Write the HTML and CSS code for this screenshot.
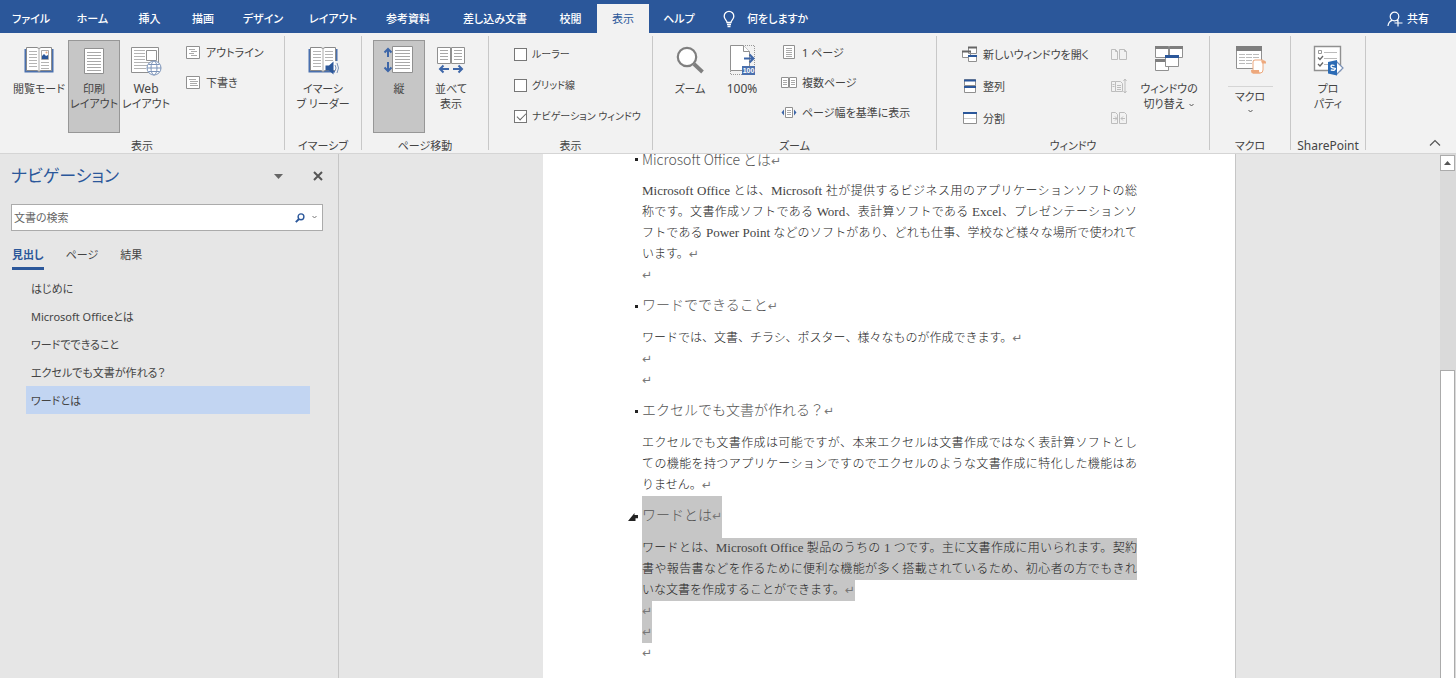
FILE: index.html
```html
<!DOCTYPE html>
<html lang="ja">
<head>
<meta charset="utf-8">
<meta name="viewport" content="width=device-width, initial-scale=1">
<title>Word - 表示</title>
<link rel="stylesheet" href="styles.css">
</head>
<body>
<header class="menubar">
  <nav class="tabs" aria-label="リボン タブ">
    <button class="tab">ファイル</button>
    <button class="tab">ホーム</button>
    <button class="tab">挿入</button>
    <button class="tab">描画</button>
    <button class="tab">デザイン</button>
    <button class="tab">レイアウト</button>
    <button class="tab">参考資料</button>
    <button class="tab">差し込み文書</button>
    <button class="tab">校閲</button>
    <button class="tab tab-active" aria-current="page">表示</button>
    <button class="tab">ヘルプ</button>
  </nav>
  <button class="tellme">
    <svg width="12" height="18" viewBox="0 0 12 18" fill="none" stroke="#fff" stroke-width="1.3"><path d="M4 12.500c0-2-2.800-3-2.800-6.300a4.800 4.800 0 0 1 9.600 0c0 3.300-2.800 4.300-2.800 6.300zM4 14.500h4M4.500 16.500h3"/></svg>
    何をしますか
  </button>
  <button class="share">
    <svg width="16" height="16" viewBox="0 0 16 16" fill="none" stroke="#fff" stroke-width="1.200"><circle cx="7.500" cy="5.500" r="4.300"/><path d="M1 15c.3-3 1.800-5 4.200-5.700M9.500 9.300l1.500 1M11 8.500v7M7.500 12h8"/></svg>
    共有
  </button>
</header>

<div class="ribbon">
  <section class="group">
    <div class="group-body group-views">
      <button class="big">
        <svg width="32" height="32" viewBox="0 0 32 32"><path d="M1.500 5h29v23.500h-29z" fill="#4a70ae"/><path d="M3.500 3.500H14l2 1 2-1h10.500v23H18l-2 1-2-1H3.500z" fill="#fff" stroke="#8a8a8a"/><path d="M16 4.500v23" stroke="#aaa"/><path d="M6 7.500h8M6 10.500h8M6 13.500h8M6 16.500h8M6 19.500h8M6 22.500h8M18 18.500h8M18 21.500h8M18 24.500h8" stroke="#b4b4b4"/><path d="M18.500 6.500h7v9h-7z" fill="#fff" stroke="#aaa"/><path d="M19 15v-3l2-2 2 2 2-1v4z" fill="#2b579a"/><circle cx="23.500" cy="8.500" r="1" fill="#eda87c"/></svg>
        <span>閲覧モード</span>
      </button>
      <button class="big big-on" aria-pressed="true">
        <svg width="32" height="32" viewBox="0 0 32 32"><path d="M6.500 4.500h19v25h-19z" fill="#fff" stroke="#909090"/><path d="M9 8.500h14M9 11.500h14M9 14.500h14M9 17.500h14M9 20.500h14M9 23.500h14M9 26.500h14" stroke="#a8a8a8"/></svg>
        <span>印刷<br>レイアウト</span>
      </button>
      <button class="big">
        <svg width="32" height="32" viewBox="0 0 32 32"><path d="M1.500 3.500h27v25h-27z" fill="#fff" stroke="#909090"/><path d="M4 6.500h11M4 9.500h11M4 12.500h11M4 15.500h11M4 18.500h22M4 21.500h22M4 24.500h12" stroke="#b4b4b4"/><path d="M16.500 6.500h10v10h-10z" fill="#fff" stroke="#909090"/><g fill="#fff" stroke="#7b93b8"><circle cx="24" cy="24" r="7"/><ellipse cx="24" cy="24" rx="3" ry="7"/><path d="M17 24h14M18.500 20.500h11M18.500 27.500h11" fill="none"/></g></svg>
        <span><b class="latin">Web</b><br>レイアウト</span>
      </button>
      <div class="list">
        <button class="small"><svg width="16" height="16" viewBox="0 0 16 16"><path d="M1.500 2.500h13v12h-13z" fill="#fff" stroke="#909090"/><path d="M4 5.500h6M6 7.500h6M4 9.500h5M6 11.500h6" stroke="#aaa"/></svg>アウトライン</button>
        <button class="small"><svg width="16" height="16" viewBox="0 0 16 16"><path d="M1.500 2.500h13v12h-13z" fill="#fff" stroke="#909090"/><path d="M4 5.500h7M5 7.500h8M5 9.500h7M5 11.500h8" stroke="#aaa"/></svg>下書き</button>
      </div>
    </div>
    <h2 class="group-name">表示</h2>
  </section>

  <section class="group">
    <div class="group-body group-center">
      <button class="big">
        <svg width="32" height="32" viewBox="0 0 32 32"><path d="M1.500 5h29v23.500h-29z" fill="#4a70ae"/><path d="M3.500 3.500H14l2 1 2-1h10.500v23H18l-2 1-2-1H3.500z" fill="#fff" stroke="#8a8a8a"/><path d="M16 4.500v23" stroke="#aaa"/><path d="M6 7.500h8M6 10.500h8M6 13.500h8M6 16.500h8M6 19.500h8M6 22.500h8M18 7.500h8M18 10.500h8M18 13.500h8M18 16.500h8" stroke="#b4b4b4"/><path d="M28 17h4v14h-4z" fill="#f2f2f2"/><path d="M18.500 21.500H22l4.500-4v13l-4.500-4h-3.500z" fill="#2b579a"/><path d="M28 21q2 3 0 6M30 19q3 5 0 10" fill="none" stroke="#7b93b8"/></svg>
        <span>イマーシ<br>ブ リーダー</span>
      </button>
    </div>
    <h2 class="group-name">イマーシブ</h2>
  </section>

  <section class="group">
    <div class="group-body group-move">
      <button class="big big-on" aria-pressed="true">
        <svg width="32" height="32" viewBox="0 0 32 32"><path d="M9.500 2.500h20v26h-20z" fill="#fff" stroke="#909090"/><path d="M12 6.500h15M12 9.500h15M12 12.500h15M12 15.500h15M12 18.500h15M12 21.500h15M12 24.500h15" stroke="#a8a8a8"/><path d="M5 13V5M1.500 8.500 5 5l3.500 3.500M5 18v9M1.500 23.500 5 27l3.500-3.500" fill="none" stroke="#3d66a8" stroke-width="2"/></svg>
        <span>縦</span>
      </button>
      <button class="big">
        <svg width="32" height="32" viewBox="0 0 32 32"><path d="M2.500 3.500h13v16h-13zM16.500 3.500h13v16h-13z" fill="#fff" stroke="#909090"/><path d="M5 6.500h8M5 9.500h8M5 12.500h8M5 15.500h8M19 6.500h8M19 9.500h8M19 12.500h8M19 15.500h8" stroke="#a8a8a8"/><path d="M14 25H5M8.500 21.500 5 25l3.500 3.500M18 25h9M23.500 21.500 27 25l-3.500 3.500" fill="none" stroke="#3d66a8" stroke-width="2"/></svg>
        <span>並べて<br>表示</span>
      </button>
    </div>
    <h2 class="group-name">ページ移動</h2>
  </section>

  <section class="group">
    <div class="group-body group-show">
      <label class="check"><input type="checkbox">ルーラー</label>
      <label class="check"><input type="checkbox">グリッド線</label>
      <label class="check"><input type="checkbox" checked>ナビゲーション ウィンドウ</label>
    </div>
    <h2 class="group-name">表示</h2>
  </section>

  <section class="group">
    <div class="group-body group-zoom">
      <button class="big">
        <svg width="32" height="32" viewBox="0 0 32 32"><circle cx="13" cy="13" r="9.200" fill="#fff" stroke="#7f7f7f" stroke-width="2.200"/><path d="m20 20 8.500 8" stroke="#7f7f7f" stroke-width="3.800"/></svg>
        <span>ズーム</span>
      </button>
      <button class="big">
        <svg width="32" height="32" viewBox="0 0 32 32"><path d="M4.500 1.500h13l6 6v19h-19z" fill="#fff" stroke="#909090"/><path d="M17.500 1.500v6h6" fill="#fff" stroke="#909090"/><path d="M19 1.500h9.500v20M4.500 27v3.500H16" fill="none" stroke="#999" stroke-dasharray="1 1"/><path d="M18 14.500h9M23.500 10.500l4 4-4 4" fill="none" stroke="#3d66a8" stroke-width="2"/><path d="M16 22h13v9H16z" fill="#4a70ae"/><text x="22.500" y="29" text-anchor="middle" class="badge">100</text></svg>
        <span><b class="latin">100%</b></span>
      </button>
      <div class="list">
        <button class="small"><svg width="16" height="16" viewBox="0 0 16 16"><path d="M2.500 1.500h11v13h-11z" fill="#fff" stroke="#909090"/><path d="M5 4.500h6M5 6.500h6M5 8.500h6M5 10.500h6M5 12.500h6" stroke="#aaa"/></svg>1 ページ</button>
        <button class="small"><svg width="16" height="16" viewBox="0 0 16 16"><path d="M.5 3.500h7v10h-7zM8.500 3.500h7v10h-7z" fill="#fff" stroke="#909090"/><path d="M2 6.500h4M2 8.500h4M2 10.500h4M10 6.500h4M10 8.500h4M10 10.500h4" stroke="#aaa"/></svg>複数ページ</button>
        <button class="small"><svg width="16" height="16" viewBox="0 0 16 16"><path d="M4.500 3.500h7v10h-7z" fill="#fff" stroke="#909090"/><path d="M6 6.500h4M6 8.500h4M6 10.500h4" stroke="#aaa"/><path d="M3 5.500v6L.5 8.500zM13 5.500v6l2.500-3z" fill="#3d66a8"/></svg>ページ幅を基準に表示</button>
      </div>
    </div>
    <h2 class="group-name">ズーム</h2>
  </section>

  <section class="group">
    <div class="group-body group-window">
      <div class="list list-wide">
        <button class="small"><svg width="16" height="16" viewBox="0 0 16 16"><path d="M6.500 1.500h8v6h-8zM.5 5.500h8v6h-8z" fill="#fff" stroke="#909090"/><path d="M6 1.500h9M0 5.500h9" stroke="#666" stroke-width="2"/><path d="M6.500 9.500h8v6h-8z" fill="#fff" stroke="#909090"/><path d="M6 10h9" stroke="#2b579a" stroke-width="2"/></svg>新しいウィンドウを開く</button>
        <button class="small"><svg width="16" height="16" viewBox="0 0 16 16"><path d="M2.500 1.500h11v6h-11zM2.500 7.500h11v7h-11z" fill="#fff" stroke="#909090"/><path d="M2 2.500h12M2 9h12" stroke="#2b579a" stroke-width="2"/></svg>整列</button>
        <button class="small"><svg width="16" height="16" viewBox="0 0 16 16"><path d="M1.500 2.500h13v11h-13z" fill="#fff" stroke="#909090"/><path d="M1 3h14" stroke="#2b579a" stroke-width="2"/><path d="M2 8.500h12" stroke="#ccc"/></svg>分割</button>
      </div>
      <div class="list list-wide">
        <button class="small" disabled aria-label="並べて比較"><svg width="16" height="16" viewBox="0 0 16 16" fill="none" stroke="#bdbdbd"><path d="M.5 3.500h4l2 2v8h-6zM8.500 3.500h5l2 2v8h-7zM4.500 3.500v2h2M13.500 3.500v2h2"/></svg></button>
        <button class="small" disabled aria-label="同時にスクロール"><svg width="16" height="16" viewBox="0 0 16 16" fill="none" stroke="#bdbdbd"><path d="M4.500 13.500h-4v-10h4M4.500 3.500h5l2 2v8h-7zM6 7.500h4M6 9.500h4M6 11.500h4M1.500 6.500h2M1.500 8.500h2M14 1v14M12.500 3 14 1l1.500 2M12.500 13l1.500 2 1.500-2"/></svg></button>
        <button class="small" disabled aria-label="ウィンドウの位置を元に戻す"><svg width="16" height="16" viewBox="0 0 16 16" fill="none" stroke="#bdbdbd"><path d="M.5 2.500h4l2 2v9h-6zM8.500 2.500h5l2 2v9h-7zM2 8.500h4M4 6.500l2 2-2 2M14 8.500h-4M12 6.500l-2 2 2 2"/></svg></button>
      </div>
      <button class="big">
        <svg width="32" height="32" viewBox="0 0 32 32"><path d="M2.500 2.500h13v11h-13zM16.500 2.500h13v11h-13zM2.500 15.500h13v11h-13z" fill="#fff" stroke="#909090"/><path d="M2 3.500h13.500M16.500 3.500H30M2 16.500h13" stroke="#7f7f7f" stroke-width="3"/><path d="M12.500 11.500h13v11h-13z" fill="#fff" stroke="#909090"/><path d="M12 12.500h14" stroke="#2b579a" stroke-width="3"/></svg>
        <span>ウィンドウの<br>切り替え <svg class="chev-inline" width="5" height="5" viewBox="0 0 5 5" fill="none" stroke="#555"><path d="m.5 1 2 2 2-2"/></svg></span>
      </button>
    </div>
    <h2 class="group-name">ウィンドウ</h2>
  </section>

  <section class="group">
    <div class="group-body group-center">
      <button class="big big-split">
        <svg width="32" height="32" viewBox="0 0 32 32"><path d="M2.500 2.500h25v22h-25z" fill="#fff" stroke="#909090"/><path d="M2 4.500h26" stroke="#7f7f7f" stroke-width="5"/><path d="M5 10.500h20M5 13.500h20M5 16.500h20M5 19.500h13" stroke="#bbb" stroke-dasharray="6 1"/><path d="M19 26V18q0-2 2-2h8v10q0 3-3 3h-7z" fill="#fff" stroke="#eda87c"/><path d="M27 16.500h3q2 0 2 2v1h-4zM17 26h8q0 4 3 3.500H19q-2 0-2-3.500z" fill="#eda87c"/></svg>
        <span class="split-label">マクロ</span>
        <svg class="chev" width="5" height="5" viewBox="0 0 5 5" fill="none" stroke="#555"><path d="m.5 1 2 2 2-2"/></svg>
      </button>
    </div>
    <h2 class="group-name">マクロ</h2>
  </section>

  <section class="group">
    <div class="group-body group-center">
      <button class="big">
        <svg width="32" height="32" viewBox="0 0 32 32"><path d="M2.500 2.500h26v24h-26z" fill="#fff" stroke="#909090" stroke-width="1.400"/><path d="M6.500 6.500h3v3h-3z" fill="none" stroke="#999"/><path d="M12 8.500h13M12 14.500h13M12 20.500h6" stroke="#bbb"/><path d="m6 13.500 2 2 3-3.500M6 20l2 2 3-3.500" fill="none" stroke="#666" stroke-width="1.300"/><path d="m24 17 7 7-7 7" fill="#fff" stroke="#7b93b8" stroke-width="1.200"/><path d="m16 18 9-2v15.500l-9-2z" fill="#2b6bb5"/><path d="M22.500 21.500q-3.500-1-3.500.8t3 1.800-.2 2.300l-3-.4" fill="none" stroke="#fff" stroke-width="1.300"/></svg>
        <span>プロ<br>パティ</span>
      </button>
    </div>
    <h2 class="group-name"><b class="latin">SharePoint</b></h2>
  </section>

  <button class="collapse" aria-label="リボンを折りたたむ"><svg width="12" height="8" viewBox="0 0 12 8" fill="none" stroke="#555" stroke-width="1.200"><path d="m1 6.500 5-5 5 5"/></svg></button>
</div>

<main class="workspace">
  <aside class="pane">
    <div class="pane-head">
      <h1 class="pane-title">ナビゲーション</h1>
      <button class="icon-btn" aria-label="オプション"><svg width="9" height="5" viewBox="0 0 9 5"><path d="M0 0h9L4.500 5z" fill="#666"/></svg></button>
      <button class="icon-btn" aria-label="閉じる"><svg width="10" height="10" viewBox="0 0 10 10" stroke="#555" stroke-width="2"><path d="m1 1 8 8M9 1 1 9"/></svg></button>
    </div>
    <div class="search">
      <input class="search-input" type="text" placeholder="文書の検索" aria-label="文書の検索">
      <button class="icon-btn" aria-label="検索"><svg width="10" height="10" viewBox="0 0 10 10" fill="none" stroke="#2b579a"><circle cx="6" cy="3.800" r="2.900" stroke-width="1.400"/><path d="M4 6 .8 9.200" stroke-width="1.900"/></svg></button>
      <button class="icon-btn" aria-label="検索オプション"><svg width="5" height="5" viewBox="0 0 5 5" fill="none" stroke="#777"><path d="m.5 1 2 2 2-2"/></svg></button>
    </div>
    <div class="pane-tabs">
      <button class="pane-tab pane-tab-on">見出し</button>
      <button class="pane-tab">ページ</button>
      <button class="pane-tab">結果</button>
    </div>
    <ul class="outline">
      <li><a href="#intro">はじめに</a></li>
      <li><a href="#office">Microsoft Officeとは</a></li>
      <li><a href="#can">ワードでできること</a></li>
      <li><a href="#excel">エクセルでも文書が作れる？</a></li>
      <li><a class="current" href="#word">ワードとは</a></li>
    </ul>
  </aside>

  <div class="canvas">
    <article class="page">
      <h2 class="doc-h doc-h-top" id="office"><span>Microsoft Office とは<i class="ret">↵</i></span></h2>
      <p class="doc-p"><span class="full"><b>Microsoft Office</b> とは、<b>Microsoft</b> 社が提供するビジネス用のアプリケーションソフトの総</span><span class="full">称です。文書作成ソフトである <b>Word</b>、表計算ソフトである <b>Excel</b>、プレゼンテーションソ</span><span class="full">フトである <b>Power Point</b> などのソフトがあり、どれも仕事、学校など様々な場所で使われて</span><span class="rest">います。<i class="ret">↵</i></span></p>
      <p class="doc-p"><span class="rest"><i class="ret">↵</i></span></p>
      <h2 class="doc-h" id="can"><span>ワードでできること<i class="ret">↵</i></span></h2>
      <p class="doc-p"><span class="rest">ワードでは、文書、チラシ、ポスター、様々なものが作成できます。<i class="ret">↵</i></span></p>
      <p class="doc-p"><span class="rest"><i class="ret">↵</i></span></p>
      <p class="doc-p"><span class="rest"><i class="ret">↵</i></span></p>
      <h2 class="doc-h" id="excel"><span>エクセルでも文書が作れる？<i class="ret">↵</i></span></h2>
      <p class="doc-p"><span class="full">エクセルでも文書作成は可能ですが、本来エクセルは文書作成ではなく表計算ソフトとし</span><span class="full">ての機能を持つアプリケーションですのでエクセルのような文書作成に特化した機能はあ</span><span class="rest">りません。<i class="ret">↵</i></span></p>
      <div class="selected">
        <h2 class="doc-h doc-h-open" id="word"><span>ワードとは<i class="ret">↵</i></span></h2>
        <p class="doc-p"><span class="full">ワードとは、<b>Microsoft Office</b> 製品のうちの <b>1</b> つです。主に文書作成に用いられます。契約</span><span class="full">書や報告書などを作るために便利な機能が多く搭載されているため、初心者の方でもきれ</span><span class="rest">いな文書を作成することができます。<i class="ret">↵</i></span></p>
        <p class="doc-p"><span class="rest"><i class="ret">↵</i></span></p>
        <p class="doc-p"><span class="rest"><i class="ret">↵</i></span></p>
      </div>
      <p class="doc-p"><span class="rest"><i class="ret">↵</i></span></p>
    </article>
  </div>

  <div class="scrollbar">
    <button class="scroll-up" aria-label="上へスクロール"><svg width="7" height="4" viewBox="0 0 7 4"><path d="M0 4h7L3.500 0z" fill="#555"/></svg></button>
    <div class="scroll-thumb"></div>
  </div>
</main>
</body>
</html>
```
FILE: styles.css
```css
* {
  box-sizing: border-box;
}

body {
  margin: 0;
  height: 100vh;
  display: flex;
  flex-direction: column;
  overflow: hidden;
  background: #e6e6e6;
  color: #444;
  font: 11px/15px "Noto Sans", "Noto Sans CJK JP", sans-serif;
  font-feature-settings: "palt";
}

button {
  margin: 0;
  padding: 0;
  border: 0;
  background: none;
  color: inherit;
  font: inherit;
  font-feature-settings: inherit;
  white-space: nowrap;
}

h1, h2, p, ul {
  margin: 0;
  padding: 0;
  font-weight: 400;
}

svg {
  flex: none;
}

.latin {
  font-size: 12px;
  font-weight: 400;
}

/* Menu bar */
.menubar {
  flex: none;
  display: flex;
  height: 33px;
  padding-top: 4px;
  background: #2b579a;
  color: #fff;
  font-weight: 500;
}

.tabs {
  display: grid;
  grid-template-columns: 62px 61px 53px 54px 66px 74px 76px 98px 53px 52px 60px;
}

.tab-active {
  background: #f2f2f2;
  color: #2b579a;
  font-weight: 400;
}

.tellme,
.share {
  display: flex;
  align-items: center;
}

.tellme {
  gap: 12px;
  margin-left: 14px;
}

.share {
  gap: 4px;
  margin-left: auto;
  padding-right: 27px;
}

/* Ribbon */
.ribbon {
  flex: none;
  display: grid;
  grid-template-columns: 285px 77px 127px 164px 284px 273px 81px 75px 1fr;
  padding: 3px 0;
  border-bottom: 1px solid #d5d5d5;
  background: #f2f2f2;
}

.group {
  display: flex;
  flex-direction: column;
  height: 114px;
  border-right: 1px solid #c8c8c8;
}

.group-body {
  display: flex;
  flex: none;
  height: 102px;
  padding-top: 4px;
}

.group-name {
  font-size: 11px;
  line-height: 15px;
  text-align: center;
  white-space: nowrap;
}

.group-views {
  padding-left: 13px;
}

.group-center {
  justify-content: center;
}

.group-move {
  padding-left: 11px;
}

.group-show {
  flex-direction: column;
  gap: 7px;
  padding: 6px 0 0 24px;
}

.group-zoom {
  padding-left: 11px;
}

.group-window {
  gap: 16px;
  padding-left: 25px;
}

.big {
  display: flex;
  flex-direction: column;
  align-items: center;
  width: 52px;
  height: 93px;
  padding-top: 3px;
  border: 1px solid transparent;
}

.big > span {
  margin-top: 5px;
}

.big-on {
  border-color: #979797;
  background: #c6c6c6;
}

.group-views .big:first-child {
  margin-right: 3px;
}

.big-split .split-label {
  width: 45px;
  margin-top: 10px;
  padding-top: 2px;
  border-top: 1px solid #d5d5d5;
}

.chev {
  margin-top: 5px;
}

.chev-inline {
  margin-left: 2px;
  vertical-align: middle;
}

.list {
  display: flex;
  flex-direction: column;
  gap: 6px;
  margin: 0 0 0 13px;
}

.list-wide {
  gap: 8px;
  margin: 2px 0 0;
}

.group-window .list-wide:first-child {
  width: 133px;
}

.small {
  display: flex;
  align-items: center;
  gap: 5px;
  height: 24px;
}

.badge {
  fill: #fff;
  font: 700 7px "Liberation Sans", sans-serif;
}

.check {
  display: flex;
  align-items: center;
  gap: 5px;
  height: 24px;
  font-size: 10px;
  white-space: nowrap;
}

.check input {
  appearance: none;
  width: 13px;
  height: 13px;
  margin: 0 0 0 1px;
  border: 1px solid #777;
  background: #fff;
}

.check input:checked::before {
  content: "";
  display: block;
  width: 8px;
  height: 4px;
  margin: 2px 0 0 2px;
  border: solid #666;
  border-width: 0 0 1px 1px;
  transform: rotate(-45deg);
}

.collapse {
  align-self: end;
  justify-self: end;
  margin-right: 15px;
}

/* Workspace */
.workspace {
  flex: 1;
  min-height: 0;
  display: grid;
  grid-template-columns: 339px 1fr 16px;
}

.pane {
  padding: 8px 15px 0 11px;
  border-right: 1px solid #c6c6c6;
}

.pane-head {
  display: flex;
  align-items: center;
  height: 28px;
}

.pane-title {
  flex: 1;
  color: #2b579a;
  font-size: 17px;
  line-height: 28px;
}

.icon-btn {
  display: grid;
  place-items: center;
}

.pane-head .icon-btn {
  width: 40px;
}

.pane-head .icon-btn:last-child {
  width: 10px;
  margin-left: 15px;
}

.search {
  display: flex;
  align-items: center;
  height: 27px;
  margin-top: 14px;
  border: 1px solid #ababab;
  background: #fff;
}

.search-input {
  flex: 1;
  min-width: 0;
  padding: 0 2px;
  border: 0;
  background: none;
  color: #444;
  font: inherit;
}

.search-input::placeholder {
  color: #666;
}

.search .icon-btn {
  width: 15px;
}

.pane-tabs {
  display: flex;
  gap: 22px;
  margin: 16px 0 4px 1px;
}

.pane-tab {
  height: 23px;
  padding-bottom: 5px;
  border-bottom: 3px solid transparent;
}

.pane-tab-on {
  border-color: #2b579a;
  color: #2b579a;
  font-weight: 700;
}

.outline {
  margin: 0 13px 0 15px;
  list-style: none;
}

.outline a {
  display: block;
  padding: 1px 0 0 5px;
  color: #444;
  line-height: 27px;
  text-decoration: none;
}

.outline .current {
  background: #c2d5f2;
}

/* Document */
.canvas {
  display: flex;
  justify-content: center;
  overflow: hidden;
}

.page {
  width: 693px;
  padding: 0 98px 0 99px;
  border-right: 1px solid #c6c6c6;
  background: #fff;
  color: #222;
  font: 300 12px/21px "Liberation Serif", "Noto Sans CJK JP", serif;
  font-feature-settings: normal;
}

.doc-p {
  font-weight: 300;
}

.doc-p b {
  color: #444;
  font-size: 13px;
  font-weight: 400;
  line-height: 13px;
}

.doc-h {
  position: relative;
  color: #555;
  font: 300 14px/37px "Noto Sans CJK JP", sans-serif;
}

.doc-h span {
  padding-bottom: 5px;
}

.doc-h::before {
  content: "";
  position: absolute;
  top: 19px;
  left: -7px;
  width: 3px;
  height: 3px;
  background: #222;
}

.doc-h-top {
  padding-bottom: 10px;
  line-height: 11px;
}

.doc-h-top::before {
  top: 4px;
}

.doc-h-open::before {
  top: 17px;
  left: -14px;
  width: 10px;
  height: 8px;
  clip-path: polygon(0 100%, 65% 0, 65% 25%, 100% 25%, 100% 65%, 75% 65%, 75% 100%);
}

.doc-h span,
.rest {
  display: block;
  width: fit-content;
}

.full {
  display: block;
  text-align-last: justify;
  white-space: nowrap;
}

.ret {
  color: #777;
  font: 400 12px/10px "DejaVu Sans", sans-serif;
}

.selected .full,
.selected .rest,
.selected .doc-h span {
  background: #c6c6c6;
}

/* Scroll bar */
.scrollbar {
  display: flex;
  flex-direction: column;
  padding: 1px 1px 0 0;
  background: #dadada;
}

.scroll-up {
  display: grid;
  place-items: center;
  height: 16px;
  border: 1px solid #ababab;
  background: #fff;
}

.scroll-thumb {
  flex: 1;
  margin-top: 199px;
  border: 1px solid #ababab;
  border-bottom: 0;
  background: #fff;
}
```
